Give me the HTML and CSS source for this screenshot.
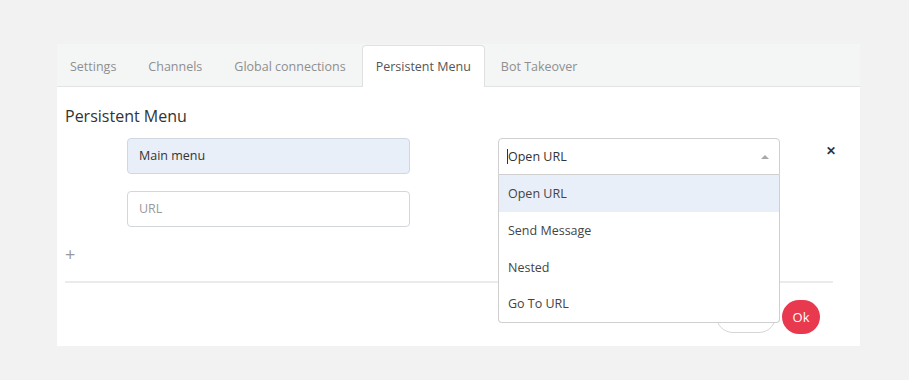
FILE: index.html
```html
<!DOCTYPE html>
<html>
<head>
<meta charset="utf-8">
<link rel="stylesheet" href="styles.css">
</head>
<body>
<div class="panel">
  <div class="tabs">
    <div class="tab">Settings</div>
    <div class="tab">Channels</div>
    <div class="tab">Global connections</div>
    <div class="tab active">Persistent Menu</div>
    <div class="tab">Bot Takeover</div>
  </div>
  <div class="content">
    <h2 class="title">Persistent Menu</h2>
    <div class="row">
      <div class="fields">
        <div class="input filled">Main menu</div>
        <div class="input placeholder">URL</div>
      </div>
      <div class="select-wrap">
        <div class="select"><span class="caret"></span>Open URL<span class="arrow"></span></div>
        <ul class="menu">
          <li class="opt hover">Open URL</li>
          <li class="opt">Send Message</li>
          <li class="opt">Nested</li>
          <li class="opt">Go To URL</li>
        </ul>
      </div>
      <div class="close">&#x2715;</div>
    </div>
    <div class="add">+</div>
    <div class="divider"></div>
    <div class="footer">
      <div class="btn cancel">Cancel</div>
      <div class="btn ok">Ok</div>
    </div>
  </div>
</div>
</body>
</html>
```

FILE: styles.css
```css
* { box-sizing: border-box; }
html, body { margin: 0; padding: 0; }
body {
  background: #f2f2f2;
  font-family: "Open Sans", "Liberation Sans", sans-serif;
  width: 909px;
  height: 380px;
  overflow: hidden;
}
.panel {
  margin: 44px 0 0 57px;
  width: 803px;
  height: 302px;
  background: #fff;
}
.tabs {
  display: flex;
  align-items: flex-end;
  height: 43px;
  background: #f4f5f5;
  border-bottom: 1px solid #e2e3e3;
}
.tab {
  font-size: 12.5px;
  color: #8f8f8f;
  padding: 0 15px;
  height: 42px;
  line-height: 42px;
  margin-bottom: -1px;
  border: 1px solid transparent;
  border-bottom: none;
}
.tab:first-child { padding-left: 12px; }
.tab.active {
  background: #fff;
  color: #555;
  border-color: #e0e0e0;
  border-radius: 4px 4px 0 0;
  padding: 0 13px;
}
.content {
  position: relative;
  padding: 0 27px 0 8px;
}
.title {
  margin: 0;
  padding-top: 17px;
  font-size: 16px;
  font-weight: 400;
  line-height: 24px;
  color: #333;
}
.row {
  display: flex;
  align-items: flex-start;
  margin-top: 10px;
}
.fields {
  flex-shrink: 0;
  margin-left: 62px;
  width: 283px;
  display: flex;
  flex-direction: column;
  gap: 17px;
}
.input {
  height: 36px;
  border: 1px solid #d3d6da;
  border-radius: 4px;
  padding: 0 11px;
  line-height: 34px;
  font-size: 12.5px;
  color: #333;
}
.input.filled { background: #e9eff8; border-color: #cfd7e3; }
.input.placeholder { color: #9a9a9a; }
.select-wrap {
  flex-shrink: 0;
  position: relative;
  margin-left: 88px;
  width: 282px;
}
.select {
  height: 37px;
  border: 1px solid #cfcfcf;
  border-radius: 4px 4px 0 0;
  padding: 0 8px;
  line-height: 35px;
  font-size: 12.5px;
  color: #333;
  position: relative;
}
.caret {
  display: inline-block;
  width: 1px;
  height: 15px;
  background: #333;
  vertical-align: -3px;
}
.arrow {
  position: absolute;
  right: 10px;
  top: 16px;
  width: 0;
  height: 0;
  border-left: 4px solid transparent;
  border-right: 4px solid transparent;
  border-bottom: 4px solid #a8a8a8;
}
.menu {
  position: absolute;
  left: 0;
  top: 37px;
  width: 282px;
  margin: 0;
  padding: 0;
  list-style: none;
  background: #fff;
  border: 1px solid #cfcfcf;
  border-top: none;
  border-radius: 0 0 4px 4px;
  z-index: 5;
}
.opt {
  height: 36.75px;
  line-height: 37px;
  padding: 0 9px;
  font-size: 12.5px;
  color: #444;
}
.opt.hover { background: #e9eff8; }
.close {
  flex-shrink: 0;
  margin-left: 46px;
  margin-top: 4px;
  font-size: 12px;
  font-weight: 700;
  color: #333;
}
.add {
  margin-top: 17px;
  font-size: 18px;
  color: #999;
  line-height: 20px;
  height: 20px;
}
.divider {
  margin-top: 17px;
  height: 2px;
  background: #ebebeb;
}
.footer {
  display: flex;
  justify-content: flex-end;
  gap: 6px;
  margin-top: 17px;
  padding-right: 13px;
}
.btn {
  height: 34px;
  line-height: 32px;
  border-radius: 17px;
  font-size: 13px;
  padding: 0 10px;
}
.btn.cancel {
  border: 1px solid #d5d5d5;
  color: #555;
  width: 60px;
  margin-top: -1px;
  height: 34px;
}
.btn.ok {
  background: #e8394f;
  color: #fff;
  width: 38px;
  text-align: center;
  padding: 0;
  line-height: 34px;
}
```
